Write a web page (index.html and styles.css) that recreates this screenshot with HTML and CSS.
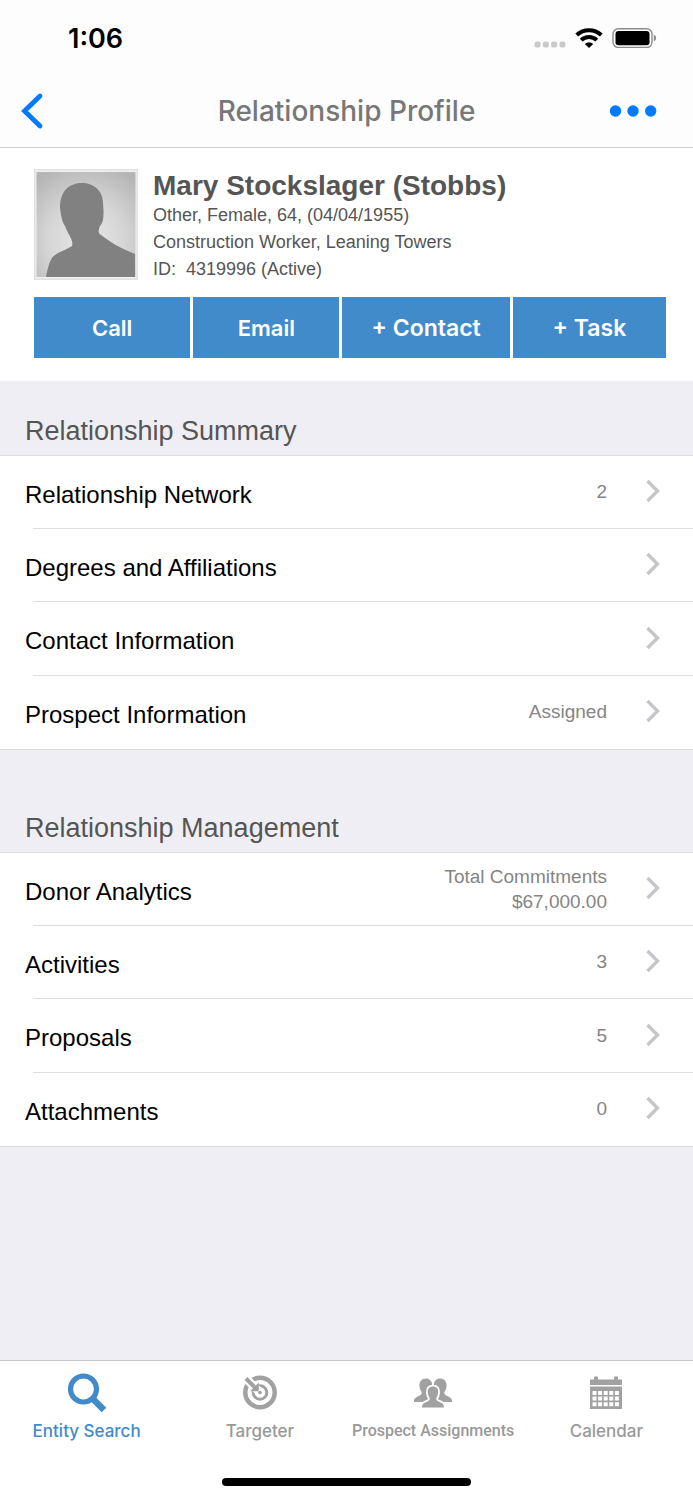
FILE: index.html
```html
<!DOCTYPE html>
<html lang="en">
<head>
<meta charset="utf-8">
<meta name="viewport" content="width=device-width, initial-scale=1">
<title>Relationship Profile</title>
<link rel="stylesheet" href="styles.css">
</head>
<body>
<svg class="sprite" aria-hidden="true">
  <symbol id="chevron" viewBox="0 0 14 24"><path d="M1.500 2 11.500 12 1.500 22" fill="none" stroke="#c5c5ca" stroke-width="3.400"/></symbol>
</svg>
<div class="app">
  <header class="top">
    <div class="status">
      <span class="clock">1:06</span>
      <div class="status-icons">
        <svg class="signal" width="32" height="20" viewBox="0 0 32 20" fill="#cacaca"><rect x="0.500" y="13.500" width="6" height="6" rx="2"/><rect x="8.800" y="13.500" width="6" height="6" rx="2"/><rect x="17.100" y="13.500" width="6" height="6" rx="2"/><rect x="25.500" y="13.500" width="6" height="6" rx="2"/></svg>
        <svg class="wifi" width="28" height="20" viewBox="0 0 28 20"><g fill="none" stroke="#000" stroke-width="4"><path d="M1.700 7a18 18 0 0 1 24.600 0"/><path d="M6.200 12.100a11.300 11.300 0 0 1 15.600 0"/></g><path d="M14 20l-4.200-4a6.200 6.200 0 0 1 8.400 0z"/></svg>
        <svg class="battery" width="45" height="20" viewBox="0 0 45 20"><rect x="1" y="0.700" width="39" height="18.800" rx="5.500" fill="#fff" stroke="#8c8c8c" stroke-width="1.400"/><rect x="3.500" y="3" width="34" height="14.200" rx="3"/><path d="M41.800 6.500q2.400 1 2.400 3.500t-2.400 3.500z" fill="#8c8c8c"/></svg>
      </div>
    </div>
    <nav class="nav">
      <button class="nav-button" aria-label="Back"><svg width="24" height="38" viewBox="0 0 24 38"><path d="M20 4 4.500 19l15.500 15" fill="none" stroke="#007aff" stroke-width="4.800" stroke-linecap="round"/></svg></button>
      <h1 class="title">Relationship Profile</h1>
      <button class="nav-button" aria-label="More"><svg width="48" height="38" viewBox="0 0 48 38" fill="#007aff"><circle cx="6.500" cy="19" r="5.700"/><circle cx="24" cy="19" r="5.700"/><circle cx="41.700" cy="19" r="5.700"/></svg></button>
    </nav>
  </header>
  <main class="content">
    <section class="profile">
      <div class="person">
        <svg class="avatar" width="104" height="111" viewBox="0 0 104 111" role="img" aria-label="Profile photo">
          <defs><radialGradient id="glow" cx="50%" cy="65%" r="75%"><stop offset="0" stop-color="#e8e8e8"/><stop offset="0.500" stop-color="#d6d6d6"/><stop offset="1" stop-color="#b5b5b5"/></radialGradient></defs>
          <rect width="104" height="111" fill="#e1e1e1"/><rect x="1.500" y="1.500" width="101" height="108" fill="#f1f1f1"/>
          <rect x="2.500" y="3" width="99" height="105" fill="url(#glow)"/>
          <path d="M12 108C14 98 16 89 21 86C27 82 34 80 38 77C40 71 34 66 31 57C28 53 27 46 26 39C26 21 36 14 48 14C60 14 69 22 69 34C70 45 70 53 66 57C64 62 64 64 67 66C76 73 86 79 101 85V108Z" fill="#818181"/>
        </svg>
        <div class="facts">
          <h2 class="name">Mary Stockslager (Stobbs)</h2>
          <p>Other, Female, 64, (04/04/1955)</p>
          <p>Construction Worker, Leaning Towers</p>
          <p>ID:&nbsp; 4319996 (Active)</p>
        </div>
      </div>
      <div class="actions">
        <button class="action">Call</button>
        <button class="action">Email</button>
        <button class="action add">+ Contact</button>
        <button class="action add">+ Task</button>
      </div>
    </section>
    <section class="group">
      <h2 class="group-title">Relationship Summary</h2>
      <ul class="rows">
        <li><a class="row" href="#"><span class="label">Relationship Network</span><span class="value">2</span><svg class="chevron"><use href="#chevron"/></svg></a></li>
        <li><a class="row" href="#"><span class="label">Degrees and Affiliations</span><svg class="chevron"><use href="#chevron"/></svg></a></li>
        <li><a class="row" href="#"><span class="label">Contact Information</span><svg class="chevron"><use href="#chevron"/></svg></a></li>
        <li><a class="row" href="#"><span class="label">Prospect Information</span><span class="value">Assigned</span><svg class="chevron"><use href="#chevron"/></svg></a></li>
      </ul>
    </section>
    <section class="group">
      <h2 class="group-title">Relationship Management</h2>
      <ul class="rows">
        <li><a class="row" href="#"><span class="label">Donor Analytics</span><span class="value">Total Commitments<br>$67,000.00</span><svg class="chevron"><use href="#chevron"/></svg></a></li>
        <li><a class="row" href="#"><span class="label">Activities</span><span class="value">3</span><svg class="chevron"><use href="#chevron"/></svg></a></li>
        <li><a class="row" href="#"><span class="label">Proposals</span><span class="value">5</span><svg class="chevron"><use href="#chevron"/></svg></a></li>
        <li><a class="row" href="#"><span class="label">Attachments</span><span class="value">0</span><svg class="chevron"><use href="#chevron"/></svg></a></li>
      </ul>
    </section>
  </main>
  <footer class="bottom">
    <nav class="tabs">
      <a class="tab active" href="#"><svg width="40" height="40" viewBox="0 0 40 40" fill="none" stroke="#428bca"><circle cx="16.500" cy="17" r="13" stroke-width="5.200"/><path d="M25.500 26.500 37 38" stroke-width="6.500"/></svg><span>Entity Search</span></a>
      <a class="tab" href="#"><svg width="40" height="40" viewBox="0 0 40 40" fill="none" stroke="#a1a1a1"><circle cx="20" cy="20.500" r="14.700" stroke-width="4.500"/><circle cx="20" cy="20.500" r="6.800" stroke-width="3"/><path d="M3 3.500 19 19.500" stroke="#fff" stroke-width="8.500"/><path d="M6 6.500 15.500 16" stroke-width="4"/><path d="M18.800 10.500v8.800h-8.800z" fill="#a1a1a1" stroke="none"/><circle cx="20" cy="20.500" r="1.800" fill="#a1a1a1" stroke="none"/></svg><span>Targeter</span></a>
      <a class="tab" href="#"><svg width="40" height="40" viewBox="0 0 40 40" fill="#a1a1a1"><path d="M13 6.500c-4.500 0-7 3.500-6.500 8 .2 2.500 1.200 4.500 2.200 5.500.3 2-.7 3-3 4C3 25.500 1 26.500 1 28.500V30h18V11c-1-3-3-4.500-6-4.500z"/><path d="M27 6.500c4.500 0 7 3.500 6.500 8-.2 2.500-1.200 4.500-2.200 5.500-.3 2 .7 3 3 4 2.700 1.500 4.700 2.500 4.700 4.500V30H21V11c1-3 3-4.500 6-4.500z"/><path d="M20 14.500c-3.800 0-5.500 2.500-5.200 6 .2 2.500 1 4.500 2 5.500.2 2-.8 3-3.500 4-2.300 1-4.300 2-4.300 5.500h22c0-3.500-2-4.500-4.300-5.500-2.700-1-3.700-2-3.500-4 1-1 1.800-3 2-5.500.3-3.500-1.400-6-5.200-6z" stroke="#fff" stroke-width="3.600" paint-order="stroke"/></svg><span class="long">Prospect Assignments</span></a>
      <a class="tab" href="#"><svg width="40" height="40" viewBox="0 0 40 40" fill="#a1a1a1"><path d="M4 7.500h4V5q2-1.500 4 0v2.500h16V5q2-1.500 4 0v2.500h4V13H4z"/><path fill-rule="evenodd" d="M4 14.500h32V37H4zM6.500 19v4h4v-4zm5.600 0v4h4v-4zm5.600 0v4h4v-4zm5.600 0v4h4v-4zm5.600 0v4h4v-4zM6.500 24.600v4h4v-4zm5.600 0v4h4v-4zm5.600 0v4h4v-4zm5.600 0v4h4v-4zm5.600 0v4h4v-4zM6.500 30.200v4h4v-4zm5.600 0v4h4v-4zm5.600 0v4h4v-4zm5.600 0v4h4v-4zm5.600 0v4h4v-4z"/></svg><span>Calendar</span></a>
    </nav>
    <div class="home-bar"></div>
  </footer>
</div>
</body>
</html>
```
FILE: styles.css
```css
* { box-sizing: border-box; }
body { margin: 0; background: #efeef4; font-family: "Liberation Sans", Arial, sans-serif; color: #555; }
h1, h2, p, ul { margin: 0; padding: 0; }
button { border: 0; padding: 0; cursor: pointer; }
a { color: inherit; text-decoration: none; }
svg { display: block; flex: none; }
.sprite { position: absolute; width: 0; height: 0; }

.app { display: flex; flex-direction: column; min-height: 100vh; }
.content { flex: 1; }

.top { background: #fdfdfd; border-bottom: 1px solid #cecece; font-family: Inter, sans-serif; }
.status { display: flex; align-items: center; justify-content: space-between; height: 76px; padding: 0 36px 0 68px; }
.clock { padding-top: 2px; font-size: 27px; line-height: 32px; font-weight: 600; color: #000; }
.status-icons { display: flex; align-items: center; gap: 9px; }
.nav { display: flex; align-items: center; justify-content: space-between; height: 71px; padding: 0 36px 2px 20px; }
.nav-button { display: flex; width: 48px; background: none; }
.title { font-size: 28px; line-height: 36px; font-weight: 500; color: #777; padding-left: 16px; }

.profile { background: #fff; padding: 21px 27px 23px 34px; }
.person { display: flex; gap: 15px; }
.facts { font-size: 18px; line-height: 26px; }
.name { font-size: 28px; line-height: 33px; font-weight: 700; }
.facts p + p { margin-top: 1px; }
.actions { display: grid; grid-template-columns: 156fr 146fr 167fr 153fr; gap: 3px; margin-top: 15px; }
.action { height: 61px; background: #428bca; color: #fff; font-family: Inter, sans-serif; font-size: 22px; font-weight: 600; }
.add { font-size: 23px; }

.group-title { display: flex; align-items: flex-end; height: 74px; padding: 0 25px 8px; font-size: 27px; line-height: 32px; font-weight: 400; }
.group + .group .group-title { height: 102px; }
.rows { list-style: none; background: #fff; border-top: 1px solid #dcdce0; border-bottom: 1px solid #dcdce0; }
.row { display: flex; align-items: center; min-height: 73px; padding: 0 33px 0 25px; background: linear-gradient(#dedee1, #dedee1) 33px 100% / 100% 1px no-repeat; }
li:nth-child(n+3) .row { min-height: 74px; }
li:last-child .row { min-height: 73px; background: none; }
.label { flex: 1; padding-top: 4px; font-size: 24px; line-height: 32px; color: #000; }
.value { padding-bottom: 2px; margin-right: 39px; font-size: 19px; line-height: 25px; color: #858585; text-align: right; }
.chevron { width: 14px; height: 24px; margin-bottom: 3px; }

.bottom { background: #fff; border-top: 1px solid #c5c5ca; }
.tabs { display: grid; grid-template-columns: repeat(4, 1fr); padding-top: 11px; }
.tab { display: flex; flex-direction: column; align-items: center; gap: 7px; font-family: Inter, sans-serif; font-size: 17px; line-height: 24px; font-weight: 500; color: #999; white-space: nowrap; }
.long { font-family: Roboto, sans-serif; font-size: 16px; }
.active { color: #428bca; }
.home-bar { width: 36%; height: 8px; margin: 35px auto 14px; border-radius: 4px; background: #000; }
```
